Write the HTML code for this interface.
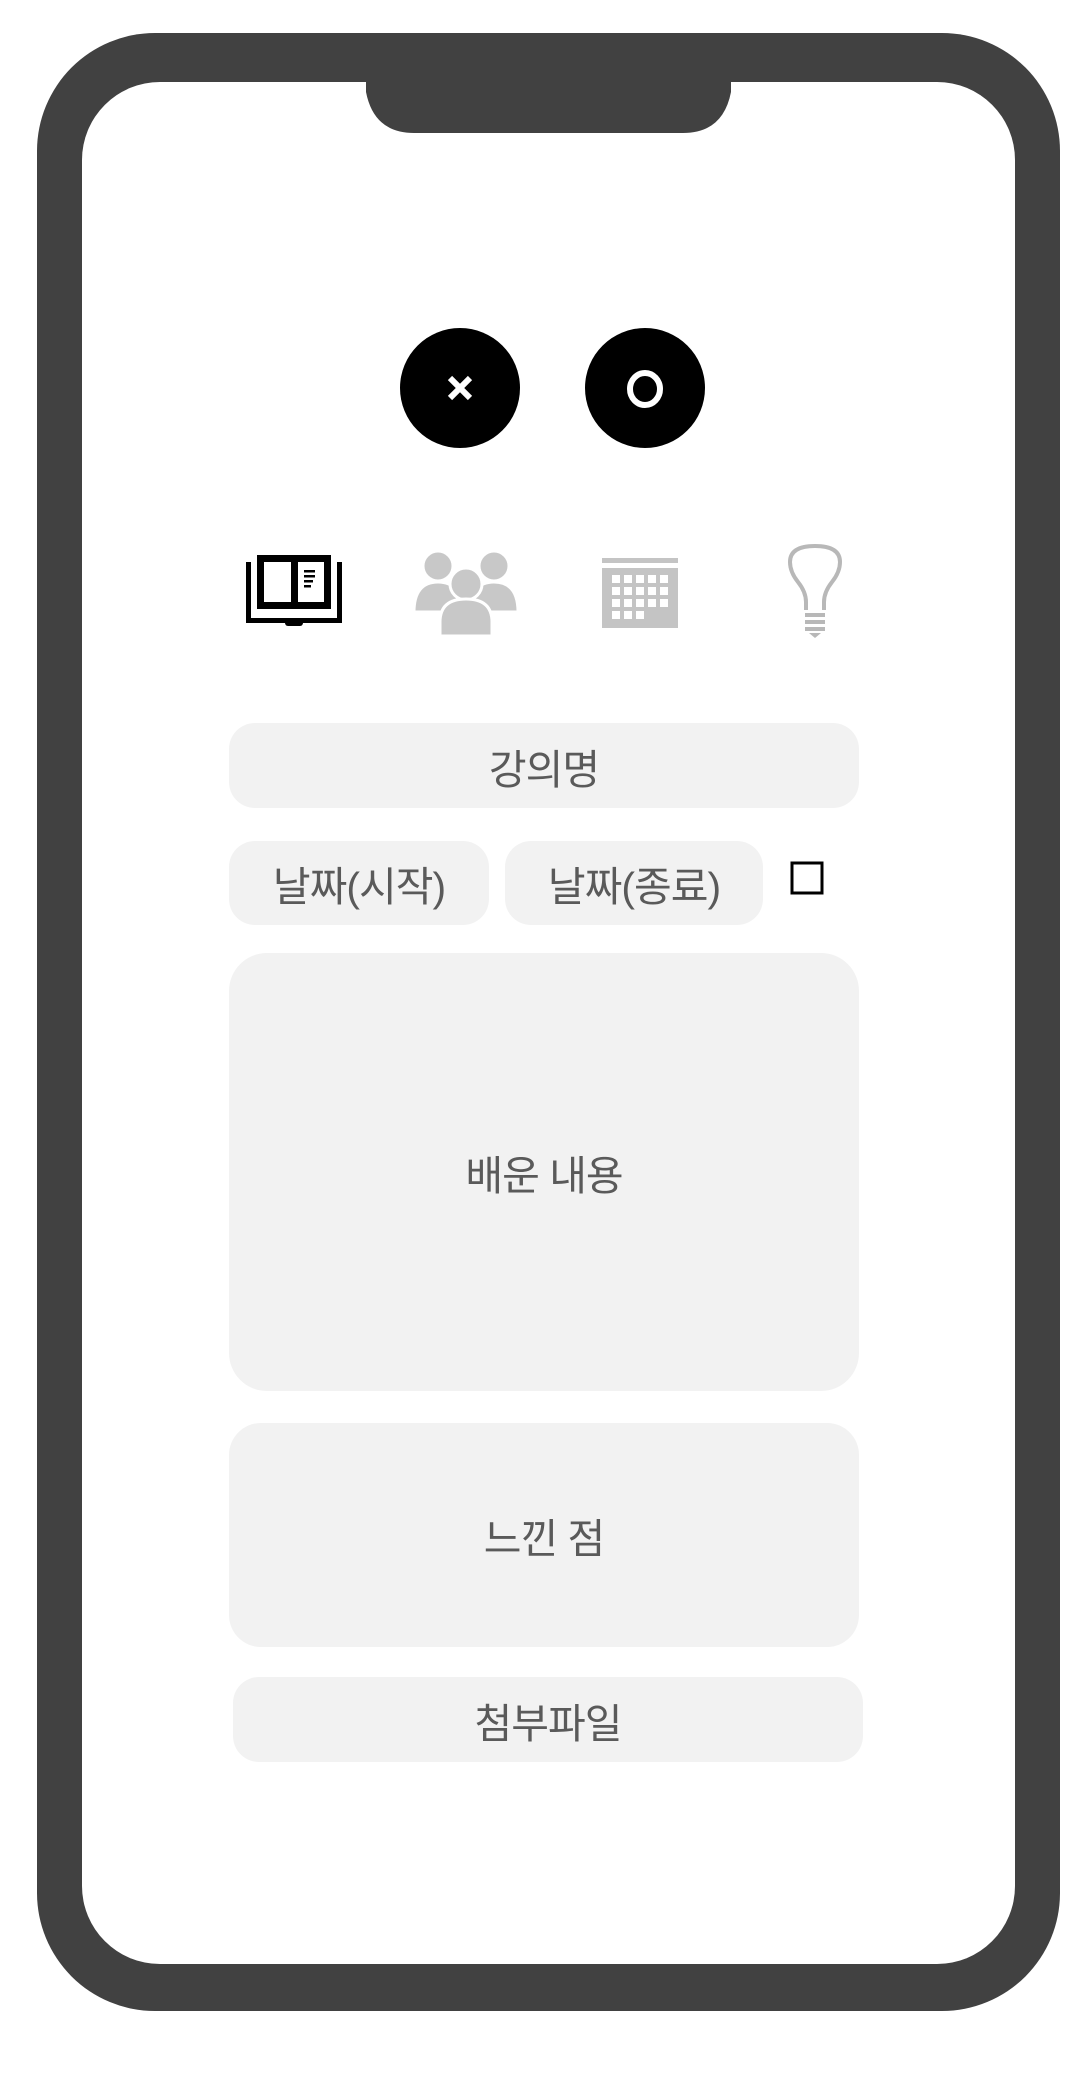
<!DOCTYPE html>
<html><head><meta charset="utf-8"><style>
html,body{margin:0;padding:0;background:#fff;width:1078px;height:2073px;overflow:hidden;position:relative}
.b{position:absolute;background:#f2f2f2;border-radius:26px;color:#5a5a5a;font-family:"Liberation Sans","Noto Sans CJK KR",sans-serif;font-size:41px;display:flex;align-items:center;justify-content:center;letter-spacing:-1px}
</style></head><body>
<svg width="1078" height="2073" style="position:absolute;left:0;top:0">
<rect x="37" y="33" width="1023" height="1978" rx="118" fill="#414141"/>
<rect x="82" y="82" width="933" height="1882" rx="78" fill="#fff"/>
<path d="M366 80 H731 V92 Q723 133 683 133 H414 Q374 133 366 92 Z" fill="#414141"/>
<circle cx="460" cy="388" r="60" fill="#000"/>
<path d="M450 378 L470 398 M470 378 L450 398" stroke="#fff" stroke-width="6"/>
<circle cx="645" cy="388" r="60" fill="#000"/>
<ellipse cx="645" cy="389" rx="15" ry="16" fill="none" stroke="#fff" stroke-width="6"/>
<!-- book -->
<g fill="#000">
<rect x="246" y="562" width="5" height="61"/>
<rect x="337" y="562" width="5" height="61"/>
<rect x="246" y="618" width="96" height="5"/>
<rect x="285" y="620" width="18" height="6" rx="3"/>
<path d="M257 555 H331 V609 H257 Z M264 562 V602 H291 V562 Z M298 562 V602 H324 V562 Z" fill-rule="evenodd"/>
<rect x="304" y="570" width="11" height="2.5"/>
<rect x="304" y="575" width="11" height="2.5"/>
<rect x="304" y="580" width="9" height="2.5"/>
<rect x="304" y="585" width="7" height="2.5"/>
</g>
<!-- people -->
<g fill="#c8c8c8" stroke="#fff" stroke-width="3">
<circle cx="438" cy="566" r="15"/>
<circle cx="494" cy="566" r="15"/>
<path d="M414 612 Q414 582 438 582 Q462 582 462 612 Z"/>
<path d="M470 612 Q470 582 494 582 Q518 582 518 612 Z"/>
<circle cx="466" cy="584" r="16"/>
<path d="M440 636 V622 Q440 599 466 599 Q492 599 492 622 V636 Z"/>
</g>
<!-- calendar -->
<g fill="#c4c4c4" transform="translate(0,10)">
<rect x="602" y="548" width="76" height="5"/>
<path d="M602 558 H678 V618 H602 Z M612 565 h8 v8 h-8z M624 565 h8 v8 h-8z M636 565 h8 v8 h-8z M648 565 h8 v8 h-8z M660 565 h8 v8 h-8z M612 577 h8 v8 h-8z M624 577 h8 v8 h-8z M636 577 h8 v8 h-8z M648 577 h8 v8 h-8z M660 577 h8 v8 h-8z M612 589 h8 v8 h-8z M624 589 h8 v8 h-8z M636 589 h8 v8 h-8z M648 589 h8 v8 h-8z M660 589 h8 v8 h-8z M612 601 h8 v8 h-8z M624 601 h8 v8 h-8z M636 601 h8 v8 h-8z" fill-rule="evenodd"/>
</g>
<!-- bulb -->
<g fill="none" stroke="#b8b8b8" stroke-width="4">
<path d="M806 610 V602 Q806 592 798 582 Q790 572 790 562 Q790 546 815 546 Q840 546 840 562 Q840 572 832 582 Q824 592 824 602 V610"/>
</g>
<g fill="#b8b8b8">
<rect x="805" y="613" width="20" height="4"/>
<rect x="805" y="620" width="20" height="4"/>
<rect x="805" y="627" width="20" height="4"/>
<path d="M809 633 H821 L815 638 Z"/>
</g>
<rect x="792" y="863" width="30" height="30" fill="none" stroke="#000" stroke-width="3"/>
</svg>
<div class="b" style="left:229px;top:723px;width:630px;height:85px">강의명</div>
<div class="b" style="left:229px;top:841px;width:260px;height:84px">날짜(시작)</div>
<div class="b" style="left:505px;top:841px;width:258px;height:84px">날짜(종료)</div>
<div class="b" style="left:229px;top:953px;width:630px;height:438px;border-radius:38px">배운 내용</div>
<div class="b" style="left:229px;top:1423px;width:630px;height:224px;border-radius:32px">느낀 점</div>
<div class="b" style="left:233px;top:1677px;width:630px;height:85px">첨부파일</div>
</body></html>
